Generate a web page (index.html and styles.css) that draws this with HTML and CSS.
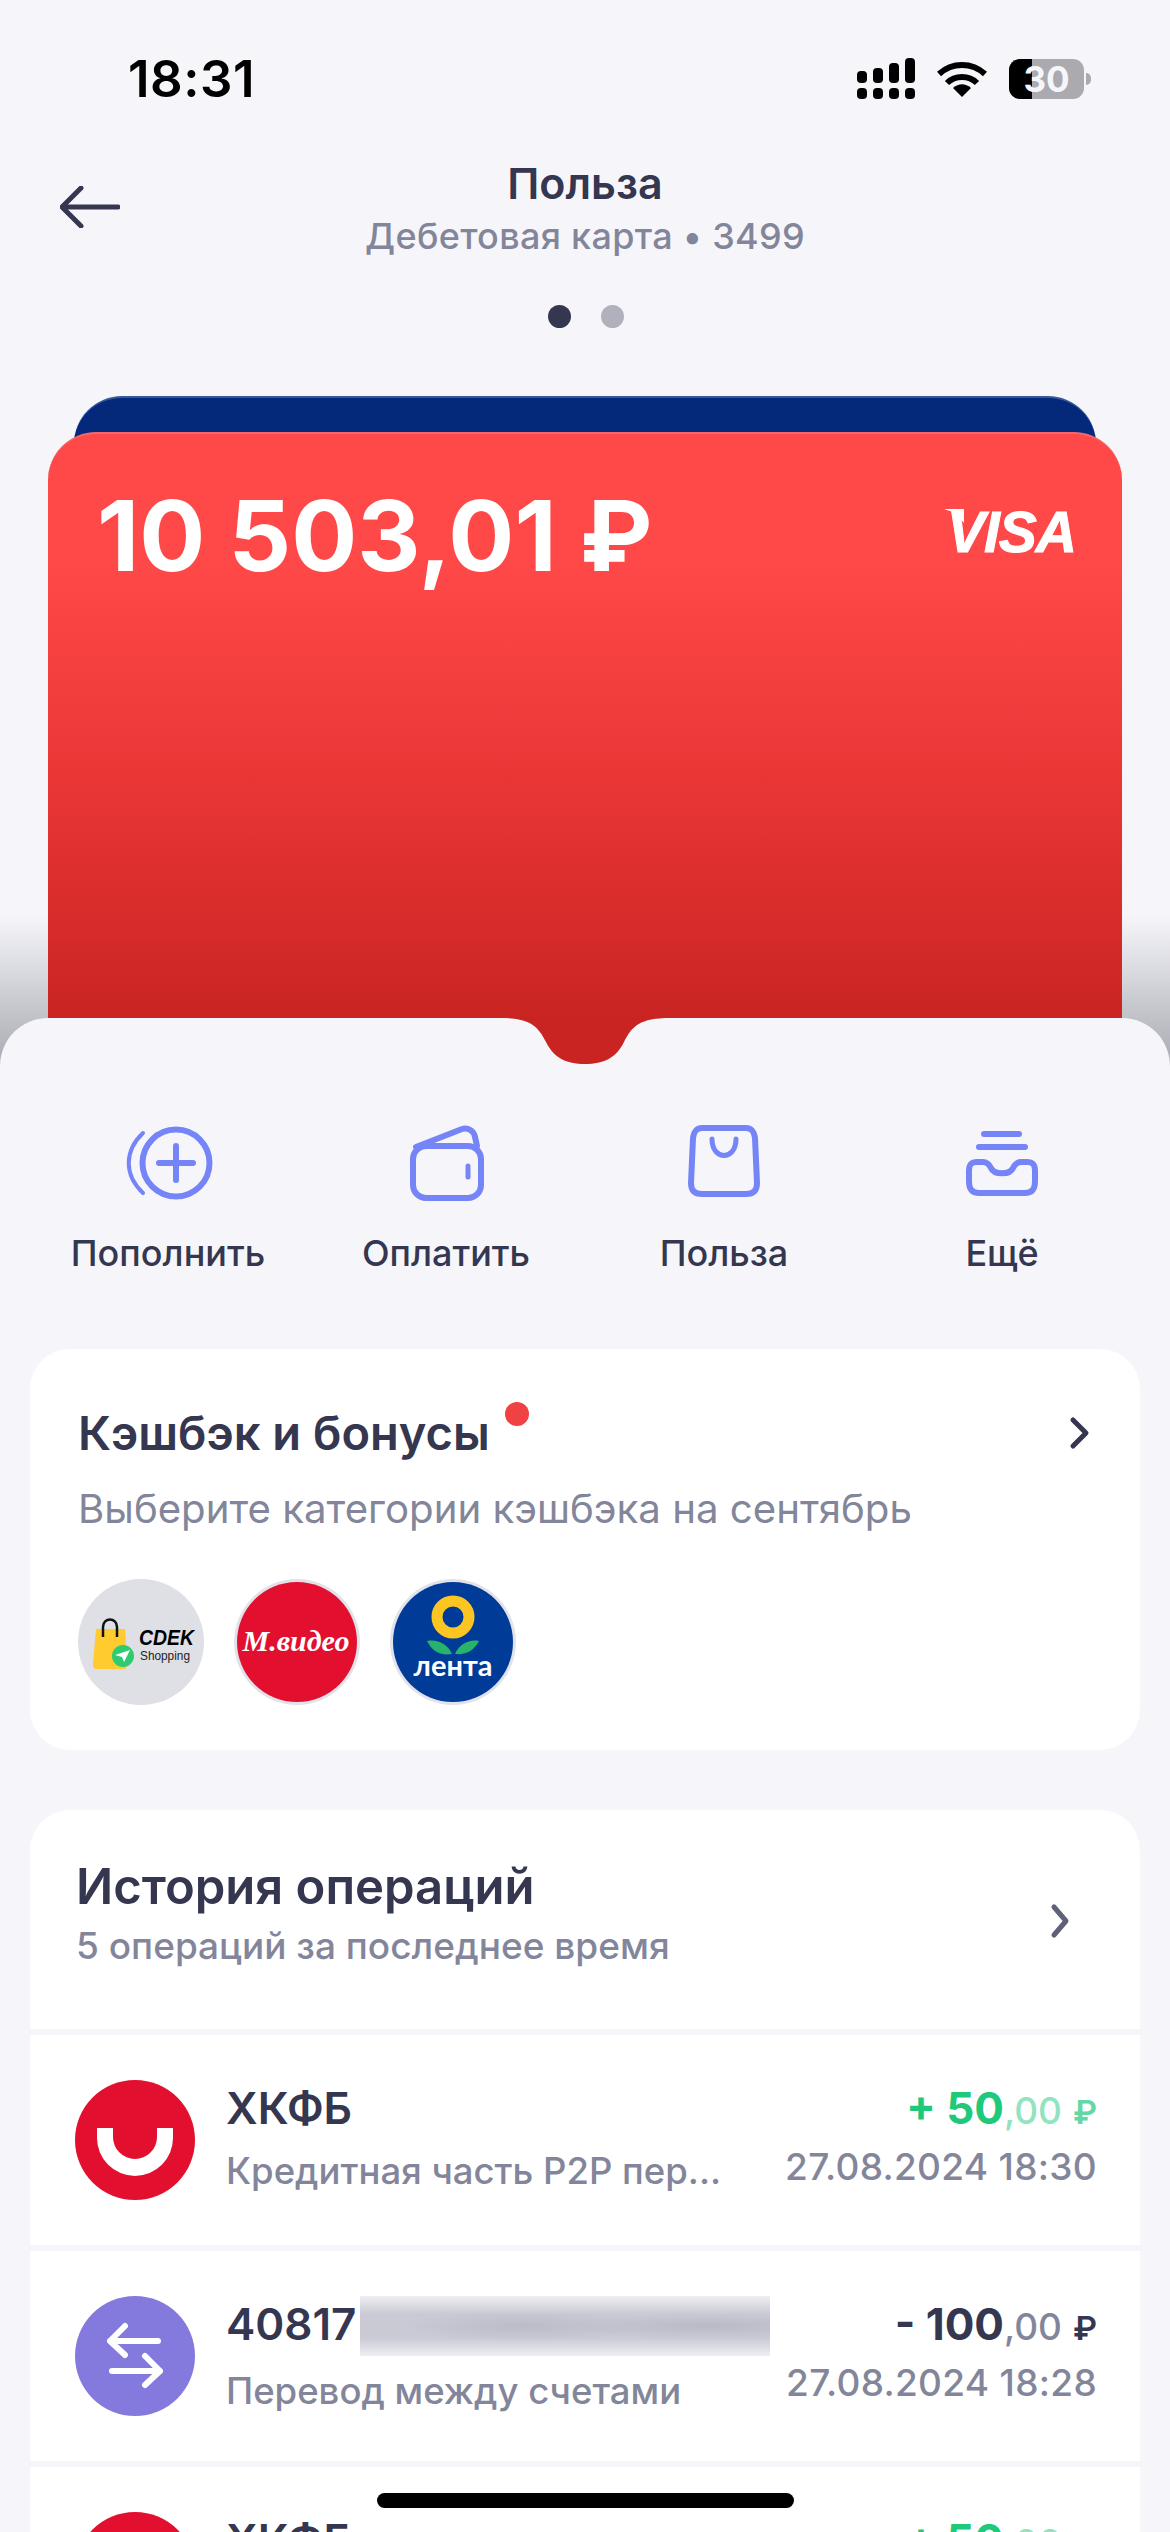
FILE: index.html
```html
<!DOCTYPE html>
<html lang="ru">
<head>
  <meta charset="UTF-8">
  <title>Польза</title>
  <meta name="viewport" content="width=device-width, initial-scale=1.0">
  <link rel="stylesheet" href="styles.css">
</head>
<body>
  <div class="phone">
    <div class="wallet">
      <div class="status">
        <span class="time">18:31</span>
        <div class="status-icons">
          <svg width="58" height="41" viewBox="0 0 58 41" fill="#000">
            <rect x="0" y="13" width="10" height="12" rx="4"/><rect x="16" y="10" width="10" height="15" rx="4"/><rect x="32" y="5" width="10" height="20" rx="4"/><rect x="48" y="0" width="10" height="25" rx="4"/>
            <rect x="0" y="30" width="10" height="11" rx="4"/><rect x="16" y="30" width="10" height="11" rx="4"/><rect x="32" y="30" width="10" height="11" rx="4"/><rect x="48" y="30" width="10" height="11" rx="4"/>
          </svg>
          <svg class="wifi" width="50" height="38" viewBox="0 0 50 38" fill="none" stroke="#000" stroke-width="6">
            <path d="M2 14 C15 2 35 2 48 14"/>
            <path d="M10 23 C18 15 32 15 40 23"/>
            <path d="M16 28 L25 37 L34 28 C28 23 22 23 16 28 Z" fill="#000" stroke="none"/>
          </svg>
          <div class="battery">
            <div class="battery-body"><div class="battery-fill"></div><span class="battery-num">30</span></div>
            <div class="battery-nub"></div>
          </div>
        </div>
      </div>

      <div class="topbar">
        <svg class="back" width="60" height="42" viewBox="0 0 60 42" fill="none" stroke="#353650" stroke-width="5" stroke-linecap="round" stroke-linejoin="round">
          <path d="M58 21 H3"/><path d="M21 2 L2 21 L21 40"/>
        </svg>
        <div class="topbar-title">
          <div class="title">Польза</div>
          <div class="subtitle">Дебетовая карта • 3499</div>
        </div>
      </div>

      <div class="dots"><span class="dot dot-active"></span><span class="dot"></span></div>

      <div class="card-back"></div>
      <div class="card-front">
        <div class="balance">10 503,01 ₽</div>
        <div class="visa">VISA</div>
      </div>
    </div>

    <div class="sheet">
      <svg class="notch" width="170" height="46" viewBox="0 0 170 46">
        <path d="M0 0 H170 C140 0 132 8 124 24 C116 40 104 46 85 46 C66 46 54 40 46 24 C38 8 30 0 0 0 Z" fill="#c92422"/>
      </svg>

      <div class="actions">
        <div class="action">
          <svg class="action-icon" width="90" height="76" viewBox="0 0 90 76" fill="none" stroke="#7585f7" stroke-width="6" stroke-linecap="round">
            <circle cx="53" cy="38" r="33.5"/>
            <path d="M53 21 V55 M36 38 H70"/>
            <path d="M20 8 C1 26 1 50 20 68" stroke-width="4"/>
          </svg>
          <span>Пополнить</span>
        </div>
        <div class="action">
          <svg class="action-icon" width="90" height="76" viewBox="0 0 90 76" fill="none" stroke="#7585f7" stroke-width="6" stroke-linecap="round" stroke-linejoin="round">
            <rect x="12" y="21" width="68" height="52" rx="13"/>
            <path d="M15 22 L61 4 C67 2 73 6 74 12 L76 21"/>
            <path d="M67 41 V52" stroke-width="5"/>
          </svg>
          <span>Оплатить</span>
        </div>
        <div class="action">
          <svg class="action-icon" width="90" height="76" viewBox="0 0 90 76" fill="none" stroke="#7585f7" stroke-width="6" stroke-linecap="round" stroke-linejoin="round">
            <path d="M23 3 H67 C73 3 75 7 76 13 L78 58 C78 66 74 69 67 69 H23 C16 69 12 66 12 58 L14 13 C15 7 17 3 23 3 Z"/>
            <path d="M33 14 C33 36 57 36 57 14" stroke-width="5"/>
          </svg>
          <span>Польза</span>
        </div>
        <div class="action">
          <svg class="action-icon" width="90" height="76" viewBox="0 0 90 76" fill="none" stroke="#7585f7" stroke-width="6" stroke-linecap="round" stroke-linejoin="round">
            <path d="M27 9 H62" />
            <path d="M22 22 H68" />
            <path d="M26 37 H20 C13 37 12 41 12 46 V56 C12 64 15 68 22 68 H68 C75 68 78 64 78 56 V46 C78 41 77 37 70 37 H64 C60 37 58 39 56 43 C53 50 37 50 34 43 C32 39 30 37 26 37 Z"/>
          </svg>
          <span>Ещё</span>
        </div>
      </div>

      <section class="bonus">
        <div class="bonus-head">
          <h2 class="bonus-title">Кэшбэк и бонусы<span class="red-dot"></span></h2>
          <svg width="24" height="36" viewBox="0 0 24 36" fill="none" stroke="#353650" stroke-width="5" stroke-linecap="round" stroke-linejoin="round"><path d="M5 5 L18 18 L5 31"/></svg>
        </div>
        <p class="bonus-sub">Выберите категории кэшбэка на сентябрь</p>
        <div class="partners">
          <svg class="partner" width="126" height="126" viewBox="0 0 126 126">
            <circle cx="63" cy="63" r="63" fill="#dfdfe6"/>
            <path d="M18 50 H47 L49 86 C49 88 48 90 46 90 H18 C16 90 15 88 15 86 Z" fill="#ffcb2e"/>
            <path d="M25 58 V48 C25 38 39 38 39 48 V58" fill="none" stroke="#111" stroke-width="2.5"/>
            <circle cx="45" cy="77" r="11" fill="#2ecb70"/>
            <path d="M37 76 L52 71 L46 83 L44 78 Z" fill="#fff"/>
            <text x="61" y="66" class="cdek" textLength="55" lengthAdjust="spacingAndGlyphs">CDEK</text>
            <text x="62" y="81" class="shopping" textLength="50" lengthAdjust="spacingAndGlyphs">Shopping</text>
          </svg>
          <svg class="partner" width="126" height="126" viewBox="0 0 126 126">
            <circle cx="63" cy="63" r="63" fill="#e2e3ea"/>
            <circle cx="63" cy="63" r="60" fill="#e30f2f"/>
            <text x="62" y="72" text-anchor="middle" class="mvideo">М.видео</text>
          </svg>
          <svg class="partner" width="126" height="126" viewBox="0 0 126 126">
            <circle cx="63" cy="63" r="63" fill="#e2e3ea"/>
            <circle cx="63" cy="63" r="60" fill="#003b97"/>
            <circle cx="63" cy="38" r="16" fill="none" stroke="#fdc522" stroke-width="11"/>
            <path d="M37 62 C49 60 58 66 62 75 C50 77 42 72 37 62 Z M89 62 C78 60 69 66 65 75 C76 76 84 72 89 62 Z" fill="#27b36b"/>
            <text x="63" y="97" text-anchor="middle" class="lenta">лента</text>
          </svg>
        </div>
      </section>

      <section class="history">
        <div class="history-head">
          <div>
            <h2 class="history-title">История операций</h2>
            <p class="history-sub">5 операций за последнее время</p>
          </div>
          <svg class="history-arrow" width="24" height="36" viewBox="0 0 24 36" fill="none" stroke="#5f6178" stroke-width="5" stroke-linecap="round" stroke-linejoin="round"><path d="M5 4 L17 18 L5 32"/></svg>
        </div>

        <div class="op">
          <svg class="op-icon" width="120" height="120" viewBox="0 0 120 120">
            <circle cx="60" cy="60" r="60" fill="#e30f2f"/>
            <path d="M22 48 V58 A38 38 0 0 0 98 58 V48 H82 V57 A22 22 0 0 1 38 57 V48 Z" fill="#fff"/>
          </svg>
          <div class="op-main">
            <div class="op-name">ХКФБ</div>
            <div class="op-desc">Кредитная часть P2P пер...</div>
          </div>
          <div class="op-side">
            <div class="op-sum plus">+ 50<small>,00</small><b>₽</b></div>
            <div class="op-date">27.08.2024 18:30</div>
          </div>
        </div>

        <div class="op">
          <svg class="op-icon" width="120" height="120" viewBox="0 0 120 120">
            <circle cx="60" cy="60" r="60" fill="#8479dc"/>
            <path d="M83 45 H35 M50 30 L35 45 L50 59 M37 75 H85 M70 60 L85 75 L70 89" fill="none" stroke="#fff" stroke-width="6" stroke-linecap="round" stroke-linejoin="round"/>
          </svg>
          <div class="op-main">
            <div class="op-name">40817<span class="blurred"></span></div>
            <div class="op-desc">Перевод между счетами</div>
          </div>
          <div class="op-side">
            <div class="op-sum">- 100<small>,00</small><b>₽</b></div>
            <div class="op-date">27.08.2024 18:28</div>
          </div>
        </div>

        <div class="op">
          <svg class="op-icon" width="120" height="120" viewBox="0 0 120 120">
            <circle cx="60" cy="60" r="60" fill="#e30f2f"/>
            <path d="M22 48 V58 A38 38 0 0 0 98 58 V48 H82 V57 A22 22 0 0 1 38 57 V48 Z" fill="#fff"/>
          </svg>
          <div class="op-main">
            <div class="op-name">ХКФБ</div>
            <div class="op-desc">Кредитная часть P2P пер...</div>
          </div>
          <div class="op-side">
            <div class="op-sum plus">+ 50<small>,00</small><b>₽</b></div>
            <div class="op-date">27.08.2024 18:26</div>
          </div>
        </div>
      </section>
    </div>

    <div class="home-bar"></div>
  </div>
</body>
</html>
```

FILE: styles.css
```css
* { box-sizing: border-box; }

body {
  margin: 0;
  font-family: Inter, "Noto Sans", sans-serif;
  background: #f6f6fa;
}

h2, p { margin: 0; }

.phone {
  position: relative;
  width: 1170px;
  height: 2532px;
  overflow: hidden;
  background: #f6f6fa;
}

.wallet {
  height: 1082px;
  background: linear-gradient(to bottom, #f6f6fa 0, #f6f6fa 915px, #a6a8b0 1070px);
  display: flex;
  flex-direction: column;
  align-items: center;
}

/* status bar */
.status {
  width: 100%;
  height: 155px;
  padding: 2px 79px 0 128px;
  display: flex;
  justify-content: space-between;
  align-items: center;
}
.time {
  font-size: 51px;
  font-weight: 600;
  color: #000;
  letter-spacing: 0.5px;
}
.status-icons {
  display: flex;
  align-items: center;
  gap: 22px;
}
.battery {
  display: flex;
  align-items: center;
  gap: 2px;
}
.battery-body {
  position: relative;
  width: 75px;
  height: 40px;
  border-radius: 11px;
  background: #aaaab0;
  overflow: hidden;
  display: flex;
  justify-content: center;
  align-items: center;
}
.battery-fill {
  position: absolute;
  left: 0;
  top: 0;
  bottom: 0;
  width: 23px;
  background: #000;
}
.battery-num {
  position: relative;
  color: #f6f6fa;
  font-size: 35px;
  font-weight: 700;
}
.battery-nub {
  width: 5px;
  height: 12px;
  background: #aaaab0;
  border-radius: 0 6px 6px 0;
}

/* header */
.topbar {
  width: 100%;
  display: grid;
  grid-template-columns: 1fr auto 1fr;
  align-items: center;
}
.back {
  grid-row: 1;
  grid-column: 1;
  margin: 1px 0 0 60px;
}
.topbar-title {
  grid-column: 2;
  text-align: center;
}
.title {
  font-size: 43px;
  line-height: 56px;
  font-weight: 600;
  color: #353650;
}
.subtitle {
  font-size: 36px;
  line-height: 44px;
  margin-top: 3px;
  font-weight: 500;
  color: #83869a;
  letter-spacing: 0.3px;
}

.dots {
  display: flex;
  gap: 30px;
  margin: 47px 0 0 2px;
}
.dot {
  width: 23px;
  height: 23px;
  border-radius: 50%;
  background: #b0b1bc;
}
.dot-active { background: #353650; }

/* cards */
.card-back {
  width: 1022px;
  height: 80px;
  flex: none;
  margin-top: 68px;
  background: #04297a;
  border-top: 2px solid #39589b;
  border-radius: 48px 48px 0 0;
}
.card-front {
  width: 1074px;
  height: 650px;
  flex: none;
  margin-top: -44px;
  padding: 44px 46px 0 49px;
  display: flex;
  justify-content: space-between;
  align-items: flex-start;
  border-top: 2px solid #f2686c;
  border-radius: 48px 48px 0 0;
  background: linear-gradient(to bottom, #ff4848 0, #ff4848 130px, #ea3736 340px, #c92422 586px);
}
.balance {
  font-size: 98px;
  line-height: 116px;
  font-weight: 700;
  color: #fff;
}
.visa {
  position: relative;
  font-family: "Liberation Sans", sans-serif;
  font-style: italic;
  font-weight: 700;
  font-size: 57px;
  line-height: 64px;
  margin-top: 22px;
  color: #fff;
  letter-spacing: -1px;
  -webkit-text-stroke: 1px #fff;
}
/* the little flag on the V */
.visa::before {
  content: "";
  position: absolute;
  left: -3px;
  top: 9px;
  width: 20px;
  height: 14px;
  background: #fff;
  clip-path: polygon(0 0, 100% 0, 100% 100%, 60% 30%);
}

/* bottom sheet */
.sheet {
  position: relative;
  margin-top: -64px;
  height: 1514px;
  background: #f6f6fa;
  border-radius: 48px 48px 0 0;
}
.notch {
  position: absolute;
  left: 500px;
  top: 0;
}

.actions {
  display: grid;
  grid-template-columns: repeat(4, 1fr);
  padding: 107px 29px 0;
}
.action {
  display: flex;
  flex-direction: column;
  align-items: center;
  font-size: 36px;
  line-height: 44px;
  font-weight: 500;
  color: #353650;
}
.action-icon { margin-bottom: 30px; }

.bonus {
  margin: 74px 30px 0;
  height: 401px;
  padding: 53px 48px 0;
  background: #fff;
  border-radius: 40px;
}
.bonus-head {
  display: flex;
  justify-content: space-between;
  align-items: center;
}
.bonus-title {
  font-size: 47px;
  line-height: 60px;
  font-weight: 600;
  color: #353650;
}
.red-dot {
  display: inline-block;
  width: 24px;
  height: 24px;
  margin-left: 15px;
  border-radius: 50%;
  background: #f04242;
  vertical-align: 24px;
}
.bonus-sub {
  margin-top: 22px;
  font-size: 40.2px;
  line-height: 48px;
  color: #83869a;
}
.partners {
  display: flex;
  gap: 30px;
  margin-top: 46px;
}
.cdek {
  font-family: "Liberation Sans", sans-serif;
  font-style: italic;
  font-weight: 700;
  font-size: 22px;
}
.shopping {
  font-family: "Liberation Sans", sans-serif;
  font-size: 13px;
  fill: #222;
}
.mvideo {
  font-family: "Liberation Serif", serif;
  font-style: italic;
  font-weight: 700;
  font-size: 30px;
  fill: #fff;
}
.lenta {
  font-family: Lato, sans-serif;
  font-weight: 700;
  font-size: 29px;
  fill: #fff;
}

/* history */
.history {
  margin: 60px 30px 0;
  display: flex;
  flex-direction: column;
  gap: 6px;
}
.history-head {
  height: 219px;
  padding: 47px 46px 0;
  display: flex;
  justify-content: space-between;
  background: #fff;
  border-radius: 40px 40px 0 0;
}
.history-title {
  font-size: 49px;
  line-height: 60px;
  font-weight: 600;
  color: #353650;
}
.history-sub {
  margin-top: 7px;
  font-size: 37px;
  line-height: 44px;
  font-weight: 500;
  color: #83869a;
}
.history-arrow {
  margin-top: 46px;
  margin-right: 21px;
}

.op {
  height: 210px;
  flex: none;
  padding: 45px 43px 0 45px;
  display: flex;
  background: #fff;
}
.op-icon { flex: none; }
.op-main {
  flex: 1;
  min-width: 0;
  padding-left: 31px;
}
.op-name {
  display: flex;
  font-size: 44px;
  line-height: 56px;
  font-weight: 600;
  color: #353650;
}
.blurred {
  width: 410px;
  height: 60px;
  margin-left: 4px;
  background: radial-gradient(ellipse at 85% 50%, #b9bac6 0, transparent 30%), radial-gradient(ellipse at 40% 50%, #bbbcc8 0, transparent 35%), linear-gradient(to bottom, #efeff3, #c9cad4 30%, #c9cad4 70%, #efeff3);
}
.op-desc {
  margin-top: 13px;
  font-size: 36.5px;
  line-height: 44px;
  font-weight: 500;
  color: #83869a;
  white-space: nowrap;
}
.op-side {
  flex: none;
  text-align: right;
}
.op-sum {
  font-size: 44px;
  line-height: 56px;
  font-weight: 700;
  color: #353650;
}
.op-sum small {
  font-size: 37px;
  font-weight: 500;
  color: #83869a;
}
.op-sum b {
  margin-left: 11px;
  font-size: 33px;
  font-weight: 600;
}
.op-sum.plus { color: #1fc97c; }
.op-sum.plus small { color: #92e3bf; }
.op-sum.plus b { color: #62d9a3; }
.op-date {
  margin-top: 5px;
  font-size: 37px;
  line-height: 44px;
  font-weight: 500;
  color: #83869a;
  letter-spacing: 0.3px;
}

.home-bar {
  position: absolute;
  left: 377px;
  top: 2493px;
  width: 417px;
  height: 15px;
  border-radius: 8px;
  background: #000;
}
```
